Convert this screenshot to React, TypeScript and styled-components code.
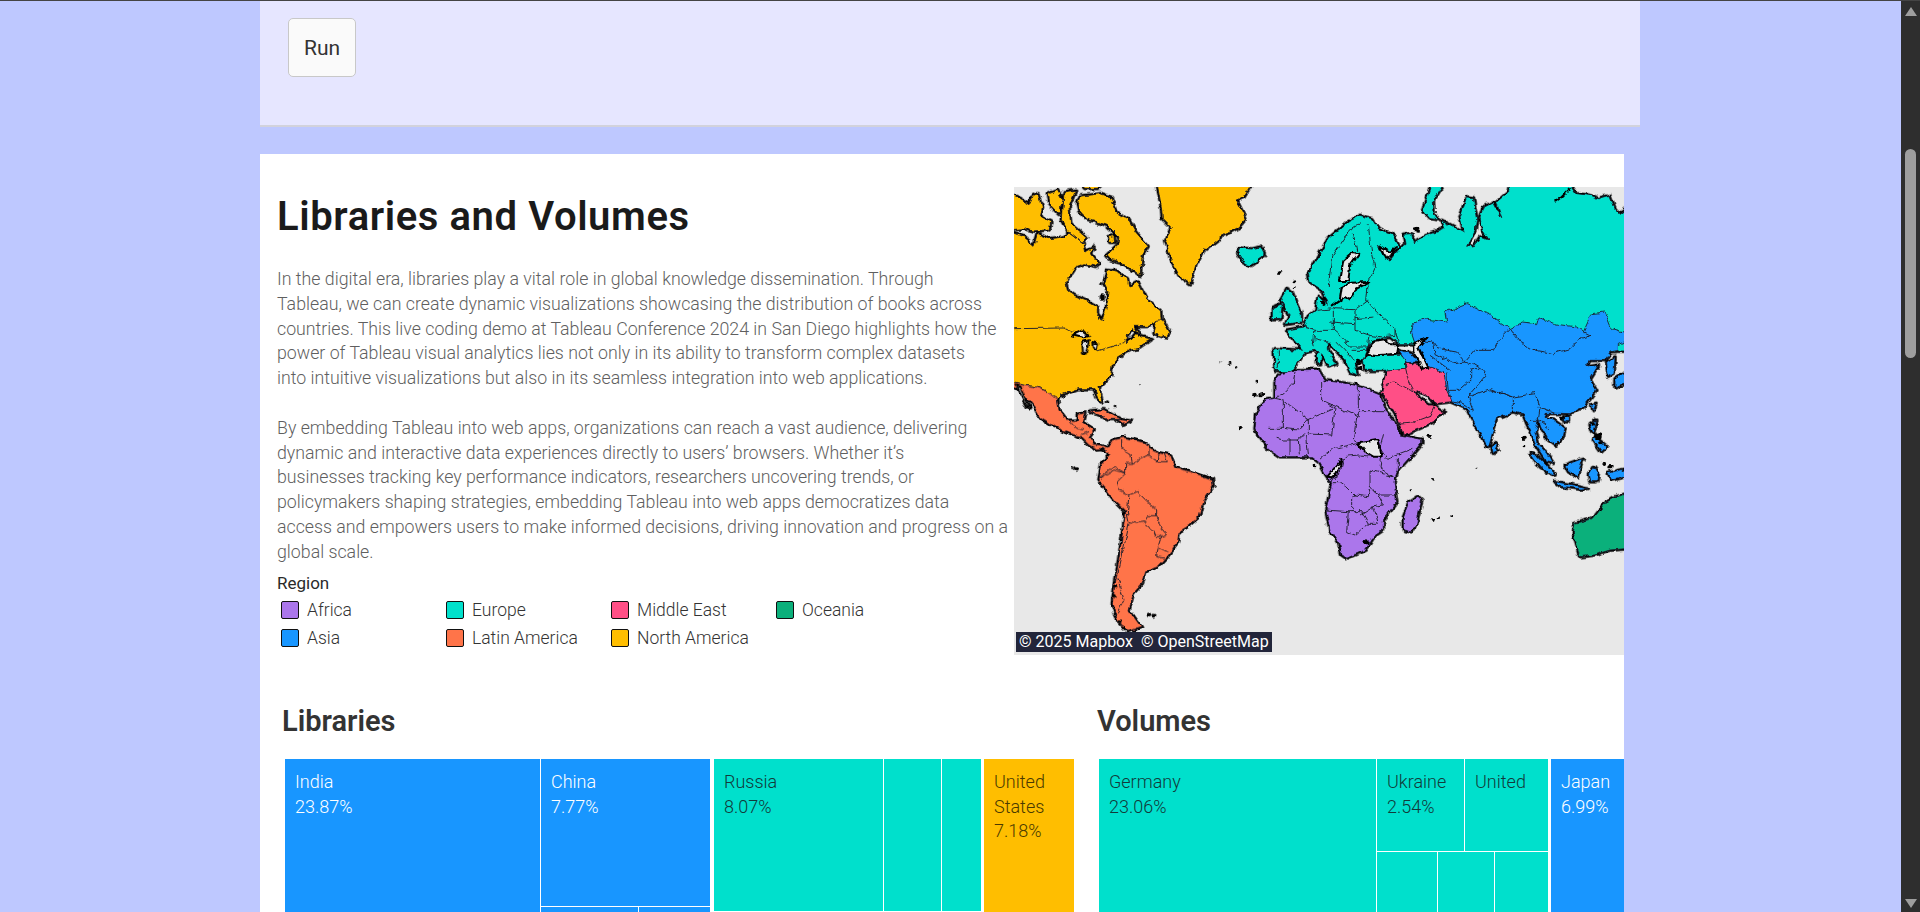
import React from "react";
import styled, { createGlobalStyle } from "styled-components";

const AFRICA = "#ab76eb";
const ASIA = "#1896ff";
const EUROPE = "#00e0cc";
const LATAM = "#ff7449";
const MIDEAST = "#ff4f86";
const NORTH = "#ffbe00";
const OCEANIA = "#0bb07b";
const SEA = "#e8e8e8";

const Global = createGlobalStyle`
  html, body { margin: 0; padding: 0; height: 912px; overflow: hidden; background: #bec8ff; }
  body { font-family: Roboto, "Liberation Sans", sans-serif; }
`;

const Shell = styled.div`
  display: flex;
  height: 912px;
  overflow: hidden;
  border-top: 1px solid #444;
  box-sizing: border-box;
`;
const Content = styled.main`
  flex: 1;
  padding-left: 260px;
  padding-right: 261px;
  overflow: hidden;
`;
const RunPanel = styled.section`
  padding: 17px 0 0 28px;
  height: 107px;
  background: #e6e6ff;
  border-bottom: 2px solid #d2d2dc;
`;
const RunButton = styled.button`
  width: 68px;
  height: 59px;
  background: #fafafa;
  border: 1px solid #c8c8c8;
  border-radius: 5px;
  color: #333;
  font: 400 21px Roboto, sans-serif;
`;
const Card = styled.article`
  width: 1364px;
  margin-top: 27px;
  background: #fff;
  overflow: hidden;
`;
const Hero = styled.div`
  display: flex;
  height: 501px;
`;
const Intro = styled.div`
  width: 737px;
  padding: 39px 0 0 17px;
  box-sizing: border-box;
`;
const Title = styled.h1`
  margin: 0 0 26px;
  font: 600 40px/48px Roboto, sans-serif;
  letter-spacing: 0.6px;
  color: #1a1a1a;
`;
const Body = styled.p`
  margin: 0;
  font-weight: 300;
  font-size: 17.75px;
  line-height: 24.8px;
  color: #5f5f5f;
  white-space: nowrap;
`;
const LegendTitle = styled.div`
  margin-top: 8px;
  font-size: 17px;
  line-height: 20px;
  color: #2a2a2a;
`;
const Legend = styled.div`
  display: grid;
  grid-template-columns: repeat(4, 165px);
  grid-auto-rows: 28px;
  margin-top: 8px;
  padding-left: 4px;
`;
const LegendItem = styled.div`
  display: flex;
  align-items: flex-start;
  gap: 8px;
  font-weight: 300;
  font-size: 17.5px;
  line-height: 18px;
  color: #333;
`;
const Swatch = styled.span<{ $c: string }>`
  flex: none;
  width: 18px;
  height: 18px;
  box-sizing: border-box;
  border: 1px solid #111;
  border-radius: 2px;
  background: ${(p) => p.$c};
`;
const MapBox = styled.div`
  position: relative;
  width: 610px;
  height: 468px;
  margin: 33px 0 0 17px;
  background: ${SEA};
  overflow: hidden;
  flex: none;
`;
const MapSvg = styled.svg`
  display: block;
  width: 610px;
  height: 468px;
`;
const Attribution = styled.div`
  position: absolute;
  left: 2px;
  bottom: 3px;
  height: 20px;
  padding: 0 3px;
  background: #22253a;
  color: #fff;
  font-size: 16px;
  line-height: 20px;
  white-space: pre;
`;
const Charts = styled.div`
  display: grid;
  grid-template-columns: 814px 1fr;
  margin-top: 46px;
`;
const ChartBlock = styled.section`
  min-width: 0;
`;
const ChartTitle = styled.h2<{ $pad: number }>`
  margin: 0 0 18px;
  padding-left: ${(p) => p.$pad}px;
  font: 600 29px/40px Roboto, sans-serif;
  color: #333;
`;
const Treemap = styled.div<{ $w: number }>`
  display: flex;
  gap: 3px;
  width: ${(p) => p.$w}px;
  margin-left: 25px;
  height: 160px;
  overflow: hidden;
`;
const Row = styled.div<{ $w?: number; $h?: number }>`
  display: flex;
  gap: 1px;
  flex: none;
  ${(p) => (p.$w ? `width: ${p.$w}px;` : "")}
  ${(p) => (p.$h ? `height: ${p.$h}px;` : "")}
`;
const Col = styled.div<{ $w: number }>`
  display: flex;
  flex-direction: column;
  gap: 1px;
  flex: none;
  width: ${(p) => p.$w}px;
`;
const Cell = styled.div<{ $w?: number; $h?: number; $bg: string; $fg?: string }>`
  flex: none;
  box-sizing: border-box;
  width: ${(p) => (p.$w ? `${p.$w}px` : "100%")};
  height: ${(p) => (p.$h ? `${p.$h}px` : "100%")};
  padding: 11px 0 0 10px;
  background: ${(p) => p.$bg};
  color: ${(p) => p.$fg ?? "#fff"};
  font-weight: 300;
  font-size: 18px;
  line-height: 24.6px;
  white-space: pre;
  overflow: hidden;
`;
const Scrollbar = styled.aside`
  position: relative;
  flex: none;
  width: 19px;
  background: #2e2e2e;
`;
const Arrow = styled.span<{ $down?: boolean }>`
  position: absolute;
  left: 4px;
  ${(p) => (p.$down ? "bottom: 4px;" : "top: 6px;")}
  width: 0;
  height: 0;
  border-left: 6px solid transparent;
  border-right: 6px solid transparent;
  ${(p) => (p.$down ? "border-top: 9px solid #9e9e9e;" : "border-bottom: 9px solid #9e9e9e;")}
`;
const Thumb = styled.span`
  position: absolute;
  left: 4px;
  top: 148px;
  width: 11px;
  height: 209px;
  border-radius: 6px;
  background: #9e9e9e;
`;

type Land = { c: string; p: string };
type Layer = { x: number; y: number; land: Land[]; seas?: string[]; lines?: string[]; dots?: number[][] };

const layers: Layer[] = [
  {
    x: 0,
    y: 0,
    land: [
      { c: NORTH, p: "-10,135 30,150 60,175 70,140 105,155 150,150 165,135 210,170 215,195 240,180 232,200 255,230 245,238 210,230 185,240 155,285 160,310 180,325 215,340 250,360 250,380 265,400 275,370 285,320 270,290 278,250 310,255 340,275 345,300 372,285 400,340 440,375 442,400 400,418 362,418 375,440 355,425 340,440 340,470 365,440 385,450 412,455 370,485 345,490 310,510 295,530 290,565 255,600 265,648 250,630 240,605 190,605 140,625 130,638 100,612 60,598 30,595 -10,585" },
      { c: NORTH, p: "-10,22 20,35 45,50 55,25 75,20 85,60 80,90 110,105 105,128 60,132 30,125 -10,128" },
      { c: NORTH, p: "100,22 130,10 147,40 135,82 105,50" },
      { c: NORTH, p: "150,15 185,10 165,60 170,110 218,150 205,165 160,130 145,100" },
      { c: NORTH, p: "190,50 198,28 260,20 292,32 305,75 345,100 365,135 402,178 385,205 378,265 345,240 320,225 290,218 278,205 312,172 315,150 280,115 250,105 215,95 195,72" },
      { c: NORTH, p: "283,150 300,145 302,165 287,166" },
      { c: NORTH, p: "205,-8 265,-8 250,4 215,4" },
      { c: NORTH, p: "428,400 445,398 465,435 460,452 420,440" },
      { c: NORTH, p: "430,-10 715,-10 690,30 668,40 695,95 675,120 620,150 570,190 545,235 530,290 495,265 470,215 455,160 472,122 445,95 442,60" },
      { c: EUROPE, p: "675,183 715,186 740,180 752,205 710,235 685,220 670,195" },
      { c: EUROPE, p: "820,305 838,320 862,380 862,405 815,412 825,385 800,340" },
      { c: EUROPE, p: "775,362 805,350 800,397 775,398" },
      { c: EUROPE, p: "910,490 925,490 920,530 910,530" },
      { c: LATAM, p: "228,672 270,668 322,697 285,697 250,682" },
      { c: LATAM, p: "310,697 352,702 330,712" },
    ],
    seas: [
      "175,445 205,430 225,447 205,452",
      "205,465 225,460 215,500 207,497",
      "235,465 252,470 245,490 237,482",
      "8,595 20,600 48,665 38,660",
    ],
    lines: ["0,425 150,423 175,436", "250,492 328,468 352,442"],
    dots: [[620,523,3],[645,530,4],[665,541,4],[375,590,2],[726,585,4],[798,255,6],[840,282,5],[265,330,8],[262,290,4],[720,622,5],[745,620,4],[280,645,5],[300,660,4]],
  },
  {
    x: 0,
    y: 699,
    land: [
      { c: LATAM, p: "-10,-114 30,-104 60,-101 100,-87 130,-64 135,-29 160,1 190,1 190,-17 215,-21 208,10 240,30 225,50 240,72 262,75 282,85 298,60 330,52 400,70 405,85 430,98 470,105 482,140 530,155 595,178 597,200 568,240 555,290 520,320 495,335 490,370 460,410 432,440 395,455 385,490 358,520 345,570 382,622 342,634 310,600 295,550 305,480 330,310 335,275 300,240 252,178 260,135 285,105 268,85 245,87 225,75 200,50 170,40 120,20 80,-5 60,-40 20,-90 -10,-100" },
    ],
    lines: [
      "165,0 185,25 210,30",
      "200,45 225,35",
      "320,60 320,85 350,100 355,130 335,130 335,160 300,140 258,172",
      "258,175 300,150 335,160 310,185 315,210 345,225 340,280",
      "345,225 370,215 400,245 425,265 425,290 445,325 458,340 440,350 430,380 460,395",
      "340,280 345,305 365,310 392,305 400,290 425,290",
      "392,310 420,335 425,350 440,350",
      "345,310 330,380 310,470 330,540 310,580",
      "430,380 425,410 455,415",
      "355,130 405,105 405,85",
      "405,105 430,125 460,125 450,100",
      "430,125 432,100",
    ],
    dots: [[185,145,7],[175,143,4],[405,585,7],[418,587,6],[320,605,4],[330,622,5],[305,500,5],[300,530,5]],
  },
  {
    x: 828,
    y: 0,
    land: [
      { c: EUROPE, p: "60,285 55,260 115,155 180,100 210,85 245,95 265,125 310,145 328,180 300,205 262,175 285,215 300,222 330,185 345,175 340,142 365,140 370,165 410,145 440,135 465,125 455,100 522,135 510,90 530,30 550,32 560,100 555,130 530,178 550,180 570,150 597,158 578,130 570,90 580,60 610,45 635,92 620,45 655,15 660,-10 838,-10 860,20 900,25 925,35 960,25 975,65 990,80 1010,65 1010,495 980,495 700,520 400,490 365,470 325,470 300,450 255,458 235,475 225,500 220,520 195,525 205,565 180,555 165,520 115,465 115,490 140,530 115,540 95,500 75,490 45,495 25,525 0,555 -40,553 -45,545 -48,485 37,490 12,460 -13,430 42,420 57,385 77,370 85,325 115,355 100,312" },
      { c: EUROPE, p: "398,70 410,35 425,-10 460,-10 430,40 432,80 445,98 420,95" },
      { c: EUROPE, p: "220,517 235,505 330,505 345,510 348,545 280,550 225,550" },
      { c: ASIA, p: "365,430 370,410 400,395 470,405 465,375 530,350 570,370 600,380 630,405 660,425 700,405 740,410 745,392 790,410 860,420 880,435 905,380 945,375 965,425 1010,438 1010,462 985,472 985,490 960,495 945,520 900,520 888,540 925,535 900,575 920,610 905,630 880,660 840,680 810,679 770,679 765,694 790,699 825,724 820,749 795,774 775,759 755,724 745,699 735,734 745,769 770,799 790,829 770,824 740,779 720,729 710,709 700,684 670,674 620,694 595,781 580,759 540,684 530,664 485,644 470,609 460,554 415,540 385,500 375,470 365,440" },
      { c: ASIA, p: "325,490 365,503 385,525 350,527 335,505" },
      { c: ASIA, p: "950,528 975,510 972,560 955,570" },
      { c: ASIA, p: "975,578 1010,555 1010,590 975,602" },
    ],
    seas: [
      "230,500 250,462 285,457 300,472 325,472 322,500 260,505",
      "370,470 410,450 385,480 415,545 395,548 385,520 370,495",
      "125,355 150,335 155,300 185,287 238,285 200,305 180,340 165,330",
      "150,282 160,222 190,195 205,200 180,235 175,282",
      "270,175 300,195 318,180 300,210 285,215",
    ],
    lines: [
      "115,300 125,210 180,130 210,110",
      "190,140 200,190 190,200",
      "235,115 245,200 255,240 235,285 230,340 260,375 315,425 325,470",
      "195,370 235,340",
      "195,395 250,390",
      "195,370 195,430 240,445 275,450 315,445 315,425",
      "130,362 195,365",
      "120,405 195,410",
      "80,370 130,365 130,430 75,430 42,420",
      "75,430 70,470 75,490",
      "-35,490 -35,545",
      "75,455 115,465",
      "240,445 235,480 180,480 165,460 130,430",
      "185,490 225,490",
      "140,465 165,490 190,520",
      "385,460 430,465 440,480 470,490 500,495 525,525 555,490 610,490 625,460 660,425",
      "660,425 690,465 735,490 790,500 840,485 870,455 900,445 880,435",
      "430,465 435,500 495,530 525,525 545,530",
      "420,505 480,550",
      "470,560 475,610 505,610 545,575 545,545 575,545 550,530",
      "475,610 485,640 520,650 550,670 535,630 590,565 575,545",
      "535,630 600,605 670,630 670,675",
      "610,610 670,630",
      "670,630 735,620 750,660 745,700 720,700",
      "745,660 790,675 765,694",
      "745,700 780,725",
    ],
    dots: [[382,128,9],[205,525,10],[210,545,7],[100,350,7],[12,285,4],[815,695,6],[14,300,3]],
  },
  {
    x: 678,
    y: 519,
    land: [
      { c: AFRICA, p: "125,40 165,30 235,28 255,62 320,70 355,78 420,105 440,155 465,190 480,225 545,238 545,250 520,280 475,330 462,365 470,425 430,480 430,510 400,530 375,570 320,595 305,585 295,545 270,510 258,450 275,370 258,345 240,310 215,290 120,290 85,265 45,210 50,160 75,120 105,115 105,65" },
      { c: AFRICA, p: "535,410 545,420 530,490 515,515 490,510 490,470 505,430" },
      { c: MIDEAST, p: "440,30 497,25 500,8 565,20 610,35 617,65 620,90 635,125 590,130 560,110 535,92 525,95 535,115 565,135 580,135 610,155 580,185 540,205 490,225 475,180 432,105 425,100 432,60" },
      { c: ASIA, p: "755,262 765,248 777,270 760,280" },
      { c: ASIA, p: "870,280 890,285 945,345 935,345 900,320" },
      { c: ASIA, p: "975,315 1030,295 1020,325 1015,350 985,335" },
      { c: ASIA, p: "945,365 1000,375 1045,385 1020,387 960,378" },
      { c: ASIA, p: "1045,345 1060,320 1075,340 1070,365 1050,365" },
      { c: ASIA, p: "1050,195 1070,180 1060,222" },
      { c: ASIA, p: "1065,230 1100,260 1085,275 1060,240" },
      { c: ASIA, p: "1055,135 1068,130 1060,155" },
      { c: ASIA, p: "970,172 985,170 985,185 972,185" },
      { c: ASIA, p: "1105,340 1160,325 1160,350 1115,360" },
      { c: OCEANIA, p: "1170,400 1125,410 1100,425 1060,475 1005,490 1000,520 1020,590 1060,585 1110,570 1170,565" },
    ],
    seas: ["262,350 305,298 295,335 275,352", "355,250 415,240 425,290 400,290 375,275"],
    lines: [
      "105,115 130,100 160,70 165,35",
      "130,120 205,178 285,145 245,120 245,65",
      "105,115 130,120 130,205 85,205",
      "130,205 175,210 205,178",
      "245,120 355,170 355,78",
      "355,155 440,155",
      "285,145 275,225",
      "205,178 205,222 275,225",
      "350,170 340,240 355,250",
      "430,225 420,265 440,295 520,265",
      "475,330 475,295",
      "425,290 420,325 460,350",
      "320,288 310,300 300,340 265,365 300,365 320,380 345,405 385,410 390,385 415,405 465,405",
      "390,330 460,350",
      "390,330 390,375 415,405",
      "258,450 325,455 320,515 345,525 385,490 415,490",
      "335,455 335,410 345,405",
      "325,455 365,455 385,490",
      "360,465 400,440 415,490",
      "415,405 430,435 400,440",
      "110,235 130,240 150,240 175,240 195,220",
      "150,240 150,285",
      "175,240 178,280",
      "200,225 205,285",
      "280,265 240,300",
      "285,265 355,250",
      "320,288 360,285 400,290",
      "440,75 465,65 510,90 522,95",
      "497,25 505,60 522,92",
      "470,190 530,185 570,170 585,140",
    ],
    dots: [[378,548,8],[0,205,6],[50,66,4],[45,104,5],[60,104,5],[72,100,4],[222,318,4],[578,355,4],[712,323,3],[578,480,6],[595,473,5],[637,468,3],[512,391,3],[852,235,5],[852,258,4],[1090,310,5],[1075,230,10],[1080,250,6],[1110,320,8],[568,229,5],[1060,190,5]],
  },
];

const WorldMap = () => (
  <MapSvg viewBox="0 0 1830 1404" aria-hidden>
    <defs>
      <filter id="rough-coast" x="-2%" y="-2%" width="104%" height="104%" colorInterpolationFilters="sRGB">
        <feTurbulence type="fractalNoise" baseFrequency="0.045" numOctaves={3} seed={4} result="noise" />
        <feDisplacementMap in="SourceGraphic" in2="noise" scale={16} xChannelSelector="R" yChannelSelector="G" />
        <feGaussianBlur stdDeviation={0.9} />
      </filter>
    </defs>
    <g filter="url(#rough-coast)">
      {layers.map((l, i) => (
        <g key={`under-${i}`} transform={`translate(${l.x} ${l.y})`}>
          {l.land.map((a, j) => (
            <polygon key={j} points={a.p} fill="#000" stroke="#000" strokeWidth={11} strokeLinejoin="round" />
          ))}
        </g>
      ))}
      {layers.map((l, i) => (
        <g key={`fill-${i}`} transform={`translate(${l.x} ${l.y})`}>
          {l.land.map((a, j) => (
            <polygon key={j} points={a.p} fill={a.c} stroke="#1a1a2a" strokeWidth={2.6} strokeLinejoin="round" />
          ))}
        </g>
      ))}
      {layers.map((l, i) => (
        <g key={`detail-${i}`} transform={`translate(${l.x} ${l.y})`}>
          {l.lines?.map((p, j) => (
            <polyline key={j} points={p} fill="none" stroke="#1c1c2a" strokeWidth={2.8} strokeLinejoin="round" />
          ))}
          {l.seas?.map((p, j) => (
            <polygon key={j} points={p} fill={SEA} stroke="#000" strokeWidth={6} strokeLinejoin="round" />
          ))}
          {l.dots?.map(([x, y, r], j) => (
            <circle key={j} cx={x} cy={y} r={r} fill="#000" />
          ))}
        </g>
      ))}
      <polyline points="795,45 815,30 840,5" transform="translate(828 0)" fill="none" stroke="#000" strokeWidth={6} />
    </g>
  </MapSvg>
);

const regions: [string, string][] = [
  ["Africa", AFRICA],
  ["Europe", EUROPE],
  ["Middle East", MIDEAST],
  ["Oceania", OCEANIA],
  ["Asia", ASIA],
  ["Latin America", LATAM],
  ["North America", NORTH],
];

const DARK = "#123a3a";
const GOLD_TEXT = "#4a3a00";

export default function App() {
  return (
    <>
      <Global />
      <Shell>
        <Content>
          <RunPanel>
            <RunButton>Run</RunButton>
          </RunPanel>
          <Card>
            <Hero>
              <Intro>
                <Title>Libraries and Volumes</Title>
                <Body>
                  In the digital era, libraries play a vital role in global knowledge dissemination. Through<br />
                  Tableau, we can create dynamic visualizations showcasing the distribution of books across<br />
                  countries. This live coding demo at Tableau Conference 2024 in San Diego highlights how the<br />
                  power of Tableau visual analytics lies not only in its ability to transform complex datasets<br />
                  into intuitive visualizations but also in its seamless integration into web applications.<br />
                  <br />
                  By embedding Tableau into web apps, organizations can reach a vast audience, delivering<br />
                  dynamic and interactive data experiences directly to users’ browsers. Whether it’s<br />
                  businesses tracking key performance indicators, researchers uncovering trends, or<br />
                  policymakers shaping strategies, embedding Tableau into web apps democratizes data<br />
                  access and empowers users to make informed decisions, driving innovation and progress on a<br />
                  global scale.
                </Body>
                <LegendTitle>Region</LegendTitle>
                <Legend>
                  {regions.map(([name, color]) => (
                    <LegendItem key={name}>
                      <Swatch $c={color} />
                      {name}
                    </LegendItem>
                  ))}
                </Legend>
              </Intro>
              <MapBox>
                <WorldMap />
                <Attribution>© 2025 Mapbox  © OpenStreetMap</Attribution>
              </MapBox>
            </Hero>
            <Charts>
              <ChartBlock>
                <ChartTitle $pad={22}>Libraries</ChartTitle>
                <Treemap $w={789}>
                  <Row $w={426} $h={200}>
                    <Cell $w={255} $bg={ASIA}>{"India\n23.87%"}</Cell>
                    <Col $w={169}>
                      <Cell $h={147} $bg={ASIA}>{"China\n7.77%"}</Cell>
                      <Row $h={60}>
                        <Cell $w={97} $bg={ASIA} />
                        <Cell $w={71} $bg={ASIA} />
                      </Row>
                    </Col>
                  </Row>
                  <Col $w={267}>
                    <Row $h={152}>
                      <Cell $w={169} $bg={EUROPE} $fg={DARK}>{"Russia\n8.07%"}</Cell>
                      <Cell $w={57} $bg={EUROPE} />
                      <Cell $w={39} $bg={EUROPE} />
                    </Row>
                  </Col>
                  <Cell $w={90} $h={200} $bg={NORTH} $fg={GOLD_TEXT}>{"United\nStates\n7.18%"}</Cell>
                </Treemap>
              </ChartBlock>
              <ChartBlock>
                <ChartTitle $pad={23}>Volumes</ChartTitle>
                <Treemap $w={525}>
                  <Row $h={200}>
                    <Cell $w={277} $bg={EUROPE} $fg={DARK}>{"Germany\n23.06%"}</Cell>
                    <Col $w={171}>
                      <Row $h={92}>
                        <Cell $w={87} $bg={EUROPE} $fg={DARK}>{"Ukraine\n2.54%"}</Cell>
                        <Cell $w={83} $bg={EUROPE} $fg={DARK}>United</Cell>
                      </Row>
                      <Row $h={100}>
                        <Cell $w={60} $bg={EUROPE} />
                        <Cell $w={56} $bg={EUROPE} />
                        <Cell $w={53} $bg={EUROPE} />
                      </Row>
                    </Col>
                  </Row>
                  <Cell $w={80} $h={200} $bg={ASIA}>{"Japan\n6.99%"}</Cell>
                </Treemap>
              </ChartBlock>
            </Charts>
          </Card>
        </Content>
        <Scrollbar>
          <Arrow />
          <Thumb />
          <Arrow $down />
        </Scrollbar>
      </Shell>
    </>
  );
}
